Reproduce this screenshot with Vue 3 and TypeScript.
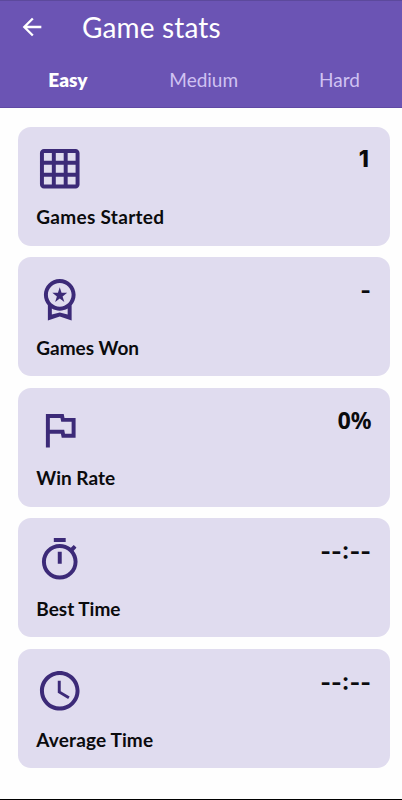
<script setup lang="ts">
interface Stat {
  label: string
  value: string
  kind: string
  path: string
}

const tabs: string[] = ['Easy', 'Medium', 'Hard']
const active = 'Easy'

const stats: Stat[] = [
  {
    label: 'Games Started',
    value: '1',
    kind: 'started',
    path: 'M20 2H4c-1.1 0-2 .9-2 2v16c0 1.1.9 2 2 2h16c1.1 0 2-.9 2-2V4c0-1.1-.9-2-2-2zM8 20H4v-4h4v4zm0-6H4v-4h4v4zm0-6H4V4h4v4zm6 12h-4v-4h4v4zm0-6h-4v-4h4v4zm0-6h-4V4h4v4zm6 12h-4v-4h4v4zm0-6h-4v-4h4v4zm0-6h-4V4h4v4z',
  },
  {
    label: 'Games Won',
    value: '-',
    kind: 'won',
    path: 'M9.68 13.69L12 11.93l2.31 1.76-.88-2.85L15.75 9h-2.84L12 6.19 11.09 9H8.25l2.31 1.84-.88 2.85zM20 10c0-4.42-3.58-8-8-8s-8 3.58-8 8c0 2.03.76 3.87 2 5.28V23l6-2 6 2v-7.72c1.24-1.41 2-3.25 2-5.28zm-8-6c3.31 0 6 2.69 6 6s-2.69 6-6 6-6-2.69-6-6 2.69-6 6-6zm0 15l-4 1.02v-3.1c1.18.68 2.54 1.08 4 1.08s2.82-.4 4-1.08v3.1L12 19z',
  },
  {
    label: 'Win Rate',
    value: '0%',
    kind: 'rate',
    path: 'M12.36 6l.4 2H18v6h-3.36l-.4-2H7V6h5.36M14 4H5v17h2v-7h5.6l.4 2h7V6h-5.6L14 4z',
  },
  {
    label: 'Best Time',
    value: '--:--',
    kind: 'best',
    path: 'M15 1H9v2h6V1zm-4 13h2V8h-2v6zm8.03-6.61l1.42-1.42c-.43-.51-.9-.99-1.41-1.41l-1.42 1.42C16.07 4.74 14.12 4 12 4c-4.97 0-9 4.03-9 9s4.02 9 9 9 9-4.03 9-9c0-2.12-.74-4.07-1.97-5.61zM12 20c-3.87 0-7-3.13-7-7s3.13-7 7-7 7 3.13 7 7-3.13 7-7 7z',
  },
  {
    label: 'Average Time',
    value: '--:--',
    kind: 'average',
    path: 'M11.99 2C6.47 2 2 6.48 2 12s4.47 10 9.99 10C17.52 22 22 17.52 22 12S17.52 2 11.99 2zM12 20c-4.42 0-8-3.58-8-8s3.58-8 8-8 8 3.58 8 8-3.58 8-8 8zm.5-13H11v6l5.25 3.15.75-1.23-4.5-2.67z',
  },
]
</script>

<template>
  <div class="screen">
    <header class="header">
      <div class="bar">
        <svg class="back" viewBox="0 0 24 24" aria-label="Back">
          <path d="M20 11H7.83l5.59-5.59L12 4l-8 8 8 8 1.41-1.41L7.83 13H20v-2z" />
        </svg>
        <h1 class="title">Game stats</h1>
      </div>
      <nav class="tabs">
        <span v-for="t in tabs" :key="t" class="tab" :class="{ active: t === active }">{{ t }}</span>
      </nav>
    </header>
    <main class="cards">
      <section v-for="s in stats" :key="s.kind" class="card" :class="s.kind">
        <div class="row">
          <svg class="icon" viewBox="0 0 24 24"><path :d="s.path" /></svg>
          <span class="value">{{ s.value }}</span>
        </div>
        <span class="label">{{ s.label }}</span>
      </section>
    </main>
  </div>
</template>

<style>
body {
  margin: 0;
  background: #fefefe;
}
</style>

<style scoped>
.screen {
  box-sizing: border-box;
  width: 402px;
  height: 800px;
  display: flex;
  flex-direction: column;
  overflow: hidden;
  background: #fefefe;
  border-bottom: 1px solid #000;
  font-family: Lato, "Liberation Sans", sans-serif;
}
.header {
  box-sizing: border-box;
  height: 108px;
  flex: none;
  background: #6b54b4;
  border-top: 1px solid #5c499c;
  border-bottom: 1px solid #6049a5;
  color: #fff;
}
.bar {
  display: flex;
  align-items: center;
  height: 52px;
  padding-left: 18px;
}
.back {
  width: 28px;
  height: 28px;
  fill: #fff;
}
.title {
  margin: 0 0 0 36px;
  font-size: 28px;
  font-weight: 400;
  line-height: 34px;
  letter-spacing: 0.15px;
}
.tabs {
  display: grid;
  grid-template-columns: repeat(3, 135.8px);
  height: 54px;
}
.tab {
  text-align: center;
  font-size: 19px;
  line-height: 54px;
  color: #d0c2f2;
}
.tab.active {
  color: #fff;
  font-weight: 800;
}
.cards {
  display: flex;
  flex-direction: column;
  gap: 11.6px;
  padding: 18.7px 12px 0 18px;
}
.card {
  box-sizing: border-box;
  height: 119px;
  padding: 18px 19px 0 18.3px;
  border-radius: 13px;
  background: #e0dcef;
  color: #0b0b0d;
}
.row {
  display: flex;
  justify-content: space-between;
  height: 58.5px;
}
.icon {
  width: 47.5px;
  height: 47.5px;
  fill: #3c2a78;
}
.value {
  font-family: Inter, Lato, sans-serif;
  font-size: 23px;
  line-height: 28px;
  padding-top: 0.6px;
  font-weight: 800;
  font-feature-settings: "case";
}
.started .value {
  padding-right: 2px;
}
.won .value,
.best .value,
.average .value {
  padding-top: 2.6px;
  font-weight: 700;
}
.rate .value {
  font-family: "Noto Sans", Inter, sans-serif;
  font-weight: 700;
  letter-spacing: -0.4px;
}
.label {
  display: block;
  font-size: 19px;
  line-height: 28px;
  font-weight: 700;
}
.started .label {
  letter-spacing: 0.3px;
}
.average .label {
  letter-spacing: 0.15px;
}
</style>
